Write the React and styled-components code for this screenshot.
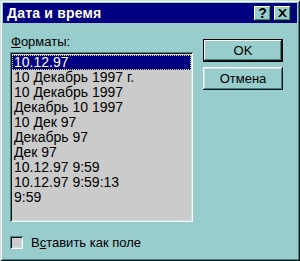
import React from "react";
import styled, { createGlobalStyle } from "styled-components";

const Global = createGlobalStyle`
  html, body { margin: 0; padding: 0; background: #99cccc; }
  * { box-sizing: border-box; }
`;

const face = "#99cccc";
const dark = "#4d8080";

const Window = styled.div`
  width: 300px;
  height: 261px;
  background: ${face};
  padding: 3px;
  display: flex;
  flex-direction: column;
  font-family: "Liberation Sans", Arial, sans-serif;
  box-shadow: inset 1px 1px #c6e3e3, inset -1px -1px #0a1a1a,
    inset 2px 2px #ffffff, inset -2px -2px ${dark};
`;

const TitleBar = styled.div`
  height: 20px;
  background: #000080;
  display: flex;
  align-items: center;
  padding: 0 6px 0 4px;
`;

const Title = styled.div`
  flex: 1;
  color: #fff;
  font-weight: bold;
  font-size: 14px;
  letter-spacing: 0.2px;
`;

const TitleButton = styled.div`
  width: 17px;
  height: 15px;
  margin-left: ${(p) => (p.$gap ? "3px" : "0")};
  background: ${face};
  display: flex;
  align-items: center;
  justify-content: center;
  font-weight: bold;
  font-size: 14px;
  color: #000;
  box-shadow: inset -1px -1px #0a1a1a, inset 1px 1px #ffffff,
    inset -2px -2px ${dark};
`;

const Body = styled.div`
  flex: 1;
  display: flex;
  padding: 0 0 0 7px;
  gap: 10px;
`;

const LeftCol = styled.div`
  width: 183px;
  display: flex;
  flex-direction: column;
`;

const Label = styled.div`
  margin-top: 11px;
  height: 16px;
  font-size: 13px;
  line-height: 16px;
  padding-left: 1px;
  color: #000;
`;

const U = styled.span`
  text-decoration: underline;
`;

const ListBox = styled.div`
  margin-top: 2px;
  height: 170px;
  background: #cbcbcb;
  padding: 2px;
  box-shadow: inset 1px 1px ${dark}, inset -1px -1px #ffffff,
    inset 2px 2px #0a1a1a, inset -2px -2px #c6e3e3;
`;

const Item = styled.div`
  height: 15px;
  line-height: 15px;
  font-size: 14px;
  padding-left: 2px;
  white-space: nowrap;
  color: ${(p) => (p.$selected ? "#fff" : "#000")};
  background: ${(p) => (p.$selected ? "#000080" : "transparent")};
  outline: ${(p) => (p.$selected ? "1px dotted #e8e070" : "none")};
  outline-offset: -1px;
  &:first-child {
    margin-top: 1px;
  }
`;

const CheckRow = styled.label`
  display: flex;
  align-items: center;
  margin-top: 13px;
  gap: 8px;
  font-size: 13px;
  color: #000;
`;

const CheckBox = styled.div`
  width: 13px;
  height: 13px;
  background: #cbcbcb;
  box-shadow: inset 1px 1px ${dark}, inset -1px -1px #ffffff,
    inset 2px 2px #0a1a1a, inset -2px -2px #c6e3e3;
`;

const RightCol = styled.div`
  padding-top: 16px;
  display: flex;
  flex-direction: column;
  gap: 5px;
`;

const Button = styled.div`
  width: 80px;
  height: 23px;
  display: flex;
  align-items: center;
  justify-content: center;
  font-size: 13px;
  color: #000;
  background: ${face};
  box-shadow: ${(p) =>
    p.$default
      ? `inset 0 0 0 1px #000, inset -2px -2px #0a1a1a, inset 2px 2px #ffffff, inset -3px -3px ${dark}`
      : `inset -1px -1px #0a1a1a, inset 1px 1px #ffffff, inset -2px -2px ${dark}, inset 2px 2px #c6e3e3`};
`;

const items = [
  "10.12.97",
  "10 Декабрь 1997 г.",
  "10 Декабрь 1997",
  "Декабрь 10 1997",
  "10 Дек 97",
  "Декабрь 97",
  "Дек 97",
  "10.12.97 9:59",
  "10.12.97 9:59:13",
  "9:59",
];

export default function App() {
  return (
    <>
      <Global />
      <Window>
        <TitleBar>
          <Title>Дата и время</Title>
          <TitleButton>?</TitleButton>
          <TitleButton $gap>
            <svg width="9" height="8" viewBox="0 0 9 8">
              <path
                d="M0 0h2l2.5 2.5L7 0h2L5.5 4 9 8H7L4.5 5.5 2 8H0l3.5-4z"
                fill="#000"
              />
            </svg>
          </TitleButton>
        </TitleBar>
        <Body>
          <LeftCol>
            <Label>
              <U>Ф</U>орматы:
            </Label>
            <ListBox>
              {items.map((t, i) => (
                <Item key={i} $selected={i === 0}>
                  {t}
                </Item>
              ))}
            </ListBox>
            <CheckRow>
              <CheckBox />
              <span>
                В<U>с</U>тавить как поле
              </span>
            </CheckRow>
          </LeftCol>
          <RightCol>
            <Button $default>OK</Button>
            <Button>Отмена</Button>
          </RightCol>
        </Body>
      </Window>
    </>
  );
}
